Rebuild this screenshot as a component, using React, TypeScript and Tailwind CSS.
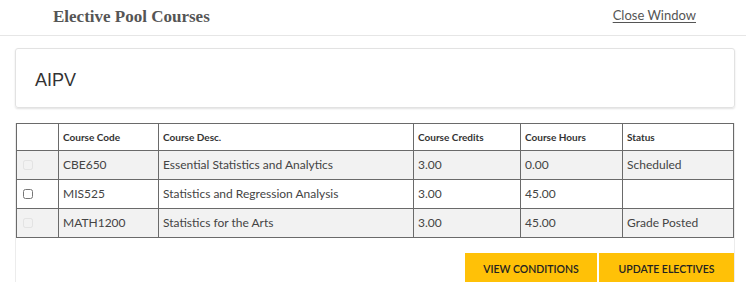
import React from "react";

interface CourseRow {
  code: string;
  desc: string;
  credits: string;
  hours: string;
  status: string;
  disabled: boolean;
}

const rows: CourseRow[] = [
  { code: "CBE650", desc: "Essential Statistics and Analytics", credits: "3.00", hours: "0.00", status: "Scheduled", disabled: true },
  { code: "MIS525", desc: "Statistics and Regression Analysis", credits: "3.00", hours: "45.00", status: "", disabled: false },
  { code: "MATH1200", desc: "Statistics for the Arts", credits: "3.00", hours: "45.00", status: "Grade Posted", disabled: true },
];

export default function App() {
  return (
    <div className="w-[746px] h-[282px] overflow-hidden bg-white font-['Lato',sans-serif] text-[#444]">
      {/* Header */}
      <div className="flex items-center justify-between h-[36px] border-b border-[#e6e6e6] pl-[53px] pr-[50px]">
        <h1 className="font-['Liberation_Serif',serif] font-bold text-[17px] text-[#555] leading-none pb-[2px]">
          Elective Pool Courses
        </h1>
        <a href="#" className="text-[13px] text-[#555] underline underline-offset-2 pb-[3px]">
          Close Window
        </a>
      </div>

      <div className="pl-[15px] pr-[11px]">
        {/* Pool name card */}
        <div className="mt-[12px] h-[60px] flex items-center px-[19px] border border-[#e2e2e2] rounded-[3px] shadow-[0_1px_2px_rgba(0,0,0,0.12)]">
          <span className="font-['Liberation_Sans',sans-serif] text-[18px] text-[#333] pt-[5px]">AIPV</span>
        </div>

        {/* Courses panel */}
        <div className="mt-[15px] border-x border-[#ececec]">
          <table className="w-full border-collapse text-[12px] leading-none">
            <thead>
              <tr className="h-[27px] bg-white">
                <th className="w-[42px] border border-[#6a6a6a]"></th>
                <th className="w-[100px] border border-[#6a6a6a] text-left font-bold pl-[4px] text-[10px] text-[#333]">Course Code</th>
                <th className="w-[255px] border border-[#6a6a6a] text-left font-bold pl-[4px] text-[10px] text-[#333]">Course Desc.</th>
                <th className="w-[107px] border border-[#6a6a6a] text-left font-bold pl-[4px] text-[10px] text-[#333]">Course Credits</th>
                <th className="w-[102px] border border-[#6a6a6a] text-left font-bold pl-[4px] text-[10px] text-[#333]">Course Hours</th>
                <th className="border border-[#6a6a6a] text-left font-bold pl-[4px] text-[10px] text-[#333]">Status</th>
              </tr>
            </thead>
            <tbody>
              {rows.map((r, i) => (
                <tr key={r.code} className={`h-[29px] ${i % 2 === 0 ? "bg-[#f2f2f2]" : "bg-white"}`}>
                  <td className="border border-[#6a6a6a] pl-[6px]">
                    <input
                      type="checkbox"
                      disabled={r.disabled}
                      className={`block w-[10px] h-[10px] m-0 ${r.disabled ? "opacity-40" : ""}`}
                    />
                  </td>
                  <td className="border border-[#6a6a6a] pl-[4px]">{r.code}</td>
                  <td className="border border-[#6a6a6a] pl-[4px]">{r.desc}</td>
                  <td className="border border-[#6a6a6a] pl-[4px]">{r.credits}</td>
                  <td className="border border-[#6a6a6a] pl-[4px]">{r.hours}</td>
                  <td className="border border-[#6a6a6a] pl-[4px]">{r.status}</td>
                </tr>
              ))}
            </tbody>
          </table>

          {/* Actions */}
          <div className="flex justify-end gap-[2px] mt-[15px]">
            <button className="w-[132px] h-[34px] bg-[#ffc107] text-[10.5px] font-semibold text-[#222] uppercase">
              View Conditions
            </button>
            <button className="w-[135px] h-[34px] bg-[#ffc107] text-[10.5px] font-semibold text-[#222] uppercase">
              Update Electives
            </button>
          </div>
        </div>
      </div>
    </div>
  );
}
